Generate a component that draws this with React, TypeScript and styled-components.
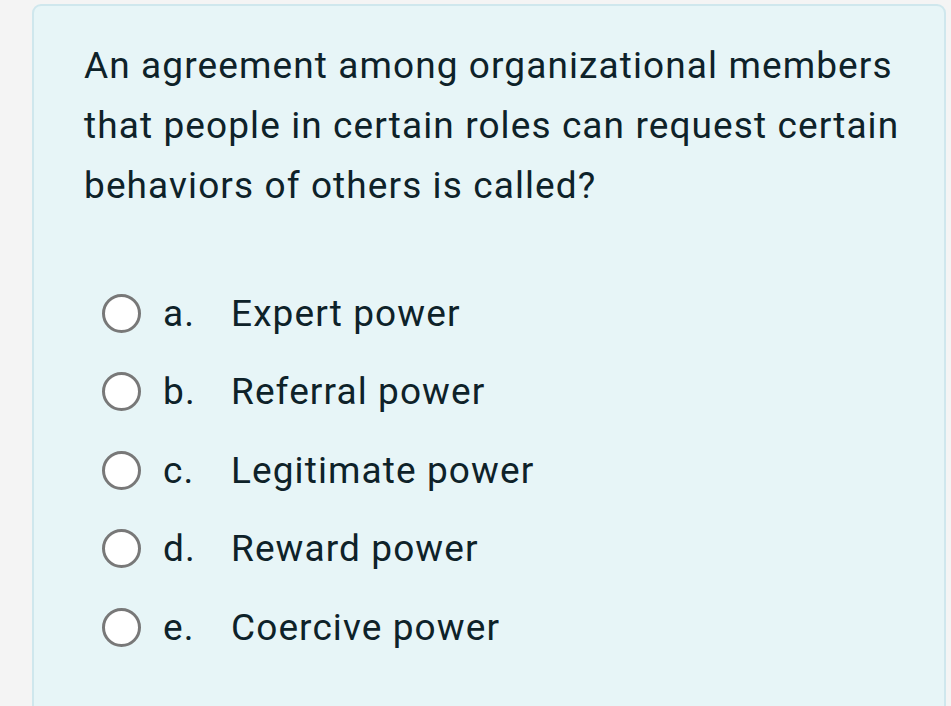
import { FC } from 'react'
import styled, { createGlobalStyle } from 'styled-components'

const GlobalStyle = createGlobalStyle`
  html, body {
    margin: 0;
    padding: 0;
    background: #f4f4f4;
    font-family: Roboto, "Noto Sans", sans-serif;
  }
`

const Page = styled.div`
  padding: 4px 5px 0 32px;
  height: 702px;
  overflow: hidden;
`

const Card = styled.div`
  box-sizing: border-box;
  min-height: 760px;
  background: #e7f5f7;
  border: 2px solid #cfe7ed;
  border-radius: 9px;
  padding: 30px 40px 0 50px;
  color: #0e2229;
  letter-spacing: 1.1px;
`

const Question = styled.p`
  margin: 0;
  font-size: 37px;
  line-height: 60px;
`

const Options = styled.div`
  display: flex;
  flex-direction: column;
  margin-top: 58px;
  padding-left: 18px;
`

const Option = styled.label`
  display: flex;
  align-items: center;
  height: 78.5px;
  font-size: 37px;
`

const Radio = styled.span`
  box-sizing: border-box;
  width: 39px;
  height: 39px;
  border-radius: 50%;
  border: 3px solid #787878;
  background: #fff;
  flex-shrink: 0;
`

const Letter = styled.span`
  margin-left: 22px;
  width: 68px;
`

const Label = styled.span``

const options = [
  ['a.', 'Expert power'],
  ['b.', 'Referral power'],
  ['c.', 'Legitimate power'],
  ['d.', 'Reward power'],
  ['e.', 'Coercive power'],
]

const App: FC = () => {
  return (
    <>
      <GlobalStyle />
      <Page>
        <Card>
          <Question>
            An agreement among organizational members that people in certain roles can request certain
            behaviors of others is called?
          </Question>
          <Options>
            {options.map(([letter, text]) => (
              <Option key={letter}>
                <Radio />
                <Letter>{letter}</Letter>
                <Label>{text}</Label>
              </Option>
            ))}
          </Options>
        </Card>
      </Page>
    </>
  )
}

export default App
